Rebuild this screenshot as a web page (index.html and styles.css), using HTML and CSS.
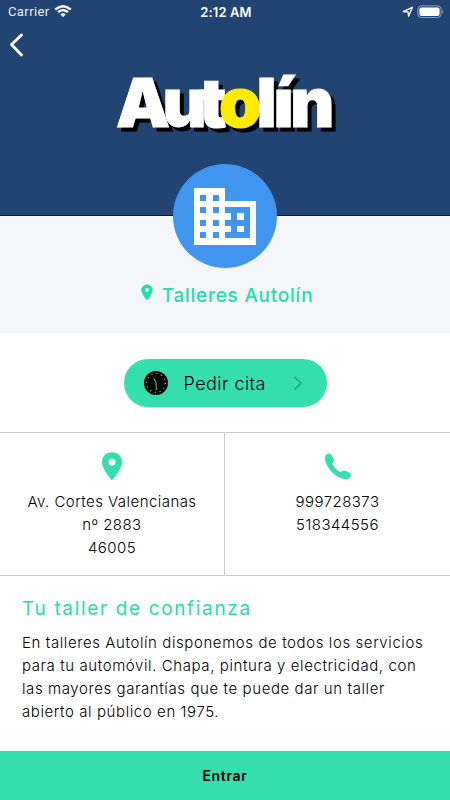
FILE: index.html
```html
<!DOCTYPE html>
<html lang="es">
<head>
<meta charset="utf-8">
<title>Talleres Autolín</title>
<link rel="stylesheet" href="styles.css">
</head>
<body>
<main class="screen">
  <header class="hero">
    <div class="status">
      <div class="status-left"><span>Carrier</span>
        <svg width="18" height="13" viewBox="0 0 18 13"><path d="M9 12.2 6.3 9.3Q9 7.2 11.7 9.3Z" fill="#fff"/><path d="M4.1 7.2Q9 3.1 13.9 7.2M1.3 4.5Q9-2 16.7 4.5" fill="none" stroke="#fff" stroke-width="2.3"/></svg>
      </div>
      <span class="clock">2:12 AM</span>
      <div class="status-right">
        <svg width="12" height="12" viewBox="0 0 12 12"><path d="M1.2 5.7 10.4 1.3 6.6 10.3 6.1 6Z" fill="none" stroke="#fff" stroke-width="1.3" stroke-linejoin="round"/></svg>
        <svg width="27" height="14" viewBox="0 0 27 14"><rect x=".9" y=".9" width="23.2" height="11.6" rx="3.4" fill="none" stroke="#8b9fba"/><rect x="2.4" y="2.4" width="20.2" height="8.6" rx="2" fill="#fff"/><path d="M25.2 4.7Q27.4 6.7 25.2 8.7Z" fill="#8b9fba"/></svg>
      </div>
    </div>
    <svg class="back" width="20" height="26" viewBox="0 0 20 26"><path d="M14.5 3 4.5 12.5 14.5 23" fill="none" stroke="#fff" stroke-width="2.8" stroke-linecap="round" stroke-linejoin="round"/></svg>
    <div class="logo"><span class="tight">Aut</span><span class="yellow">o</span>lín</div>
  </header>
  <section class="identity">
    <div class="avatar">
      <svg width="64" height="58" viewBox="0 0 64 58"><path fill="#fff" fill-rule="evenodd" d="M1 1H32V14H63V58H1ZM7 8V14H13V8ZM20 8V14H26V8ZM7 20V26H13V20ZM20 20V26H26V20ZM7 33V39H13V33ZM20 33V39H26V33ZM7 45V51H13V45ZM20 45V51H26V45ZM32 20V26H38V33H32V39H38V45H32V51H57V20ZM44 26H51V33H44ZM44 39H51V45H44Z"/></svg>
    </div>
    <h1 class="name"><svg width="12" height="17" viewBox="0 0 12 17"><path fill-rule="evenodd" d="M6 .5C2.8.5.4 2.9.4 6 .4 10.1 6 16.4 6 16.4S11.6 10.1 11.6 6C11.6 2.9 9.2.5 6 .5ZM6 4A2 2 0 1 1 6 8 2 2 0 0 1 6 4Z"/></svg><span>Talleres Autolín</span></h1>
  </section>
  <section class="booking">
    <button class="book">
      <svg class="dial" width="24" height="24" viewBox="0 0 24 24"><circle cx="12" cy="12" r="12"/><circle cx="12" cy="12" r="9.4" fill="none" stroke="#34dfad" stroke-width="1.1" stroke-dasharray="1.2 3.72"/><path d="M10 7.5 12 11.5 12.3 19" fill="none" stroke="#34dfad" stroke-width="1"/></svg>
      <span>Pedir cita</span>
      <svg class="next" width="10" height="16" viewBox="0 0 10 16"><path d="M1.5 1.800 8 8.200 1.500 14.500" fill="none" stroke="#28a984" stroke-width="1.8"/></svg>
    </button>
  </section>
  <section class="contact">
    <div class="cell">
      <svg width="20" height="29" viewBox="0 0 20 29"><path fill-rule="evenodd" d="M10 .3C4.2.3 0 4.5 0 10 0 17.5 10 28.3 10 28.3S20 17.5 20 10C20 4.5 15.8.3 10 .3ZM10 6.5A3.5 3.5 0 1 1 10 13.5 3.5 3.5 0 0 1 10 6.5Z"/></svg>
      <span>Av. Cortes Valencianas</span><span>nº 2883</span><span>46005</span>
    </div>
    <div class="cell">
      <svg width="28" height="29" viewBox="0 0 28 29"><path d="M1 5.5C1 3 3.2 1.300 5.700 1.500 8 3 9.300 5.500 10 8 9.800 10 8.700 10.500 8.300 11.800 9.500 15 13 18.500 16 20 18 20 18.500 18.200 20.500 18.400 23 18.900 26.500 20.800 27 22.500 27.300 24.700 25.300 27 22.300 27.200 12 27 .5 14.500 1 5.500Z"/></svg>
      <span>999728373</span><span>518344556</span>
    </div>
  </section>
  <section class="about">
    <h2>Tu taller de confianza</h2>
    <p><span>En talleres Autolín disponemos de todos los servicios</span>
    <span>para tu automóvil. Chapa, pintura y electricidad, con</span>
    <span>las mayores garantías que te puede dar un taller</span>
    <span>abierto al público en 1975.</span></p>
  </section>
  <button class="enter">Entrar</button>
</main>
</body>
</html>
```
FILE: styles.css
```css
* { box-sizing: border-box; }
body { margin: 0; background: #fff; color: #000; font-family: Inter, "Liberation Sans", sans-serif; }
svg { display: block; flex: none; }
button { border: 0; padding: 0; font: inherit; color: #000; background: #34dfad; }
.screen { width: 450px; height: 800px; display: flex; flex-direction: column; overflow: hidden; }
.hero { height: 216px; background: #214472; border-bottom: 1px solid #000c60; }
.status { height: 23px; padding: 0 6px 0 8px; display: grid; grid-template-columns: 1fr auto 1fr; align-items: center; color: #fff; font-size: 13px; }
.status-left { display: flex; align-items: center; gap: 4px; font-family: Roboto, sans-serif; letter-spacing: .4px; color: #e9eef5; }
.status-right { display: flex; align-items: center; justify-content: flex-end; gap: 3px; }
.clock { font-weight: 600; letter-spacing: .1px; }
.back { margin: 9px 0 0 7px; }
.logo { margin: 2px 0 0 116px; width: 225px; height: 84px; line-height: 84px; white-space: nowrap; font-weight: 900; font-size: 68px; letter-spacing: -3.2px; color: #fff; -webkit-text-stroke: 1px currentColor; filter: drop-shadow(4px 4px 0 #000); }
.tight { letter-spacing: -7.5px; }
.yellow { color: #ffea00; letter-spacing: -4.9px; }
.identity { height: 117px; background: #f4f6fa; display: flex; flex-direction: column; align-items: center; }
.avatar { width: 104px; height: 104px; margin-top: -52px; border-radius: 50%; background: #4095ee; position: relative; display: flex; align-items: center; justify-content: center; flex: none; }
.name { margin: 16px 0 0 4px; display: flex; gap: 9px; font-size: 19px; line-height: 24px; font-weight: 500; letter-spacing: .75px; color: #20dfa7; }
.name svg { fill: #20dfa7; }
.booking { height: 99px; padding-top: 26px; display: flex; justify-content: center; }
.book { width: 203px; height: 48px; border-radius: 24px; padding: 0 24px 0 20px; display: flex; align-items: center; font-size: 18px; }
.book span { margin-left: 16px; font-weight: 300; letter-spacing: .45px; }
.next { margin-left: auto; }
.contact { height: 144px; display: grid; grid-template-columns: 225px 225px; border-top: 1px solid #ccc; border-bottom: 1px solid #ccc; }
.cell { padding-top: 19px; display: flex; flex-direction: column; align-items: center; font-size: 15px; line-height: 23px; font-weight: 300; letter-spacing: .45px; }
.cell:first-child { border-right: 1px solid #ccc; }
.cell svg { fill: #34dfad; margin-bottom: 9px; }
.about { height: 175px; padding: 20px 22px 0; }
.about h2 { margin: 0; font-size: 19px; line-height: 26px; font-weight: 400; letter-spacing: 1.65px; color: #20dfa7; white-space: nowrap; }
.about p { margin: 9px 0 0; font-size: 15px; line-height: 23px; font-weight: 300; letter-spacing: .59px; }
.about p span { display: block; white-space: nowrap; }
.enter { height: 49px; padding-bottom: 1px; font-size: 14px; font-weight: 600; letter-spacing: .7px; }
```
